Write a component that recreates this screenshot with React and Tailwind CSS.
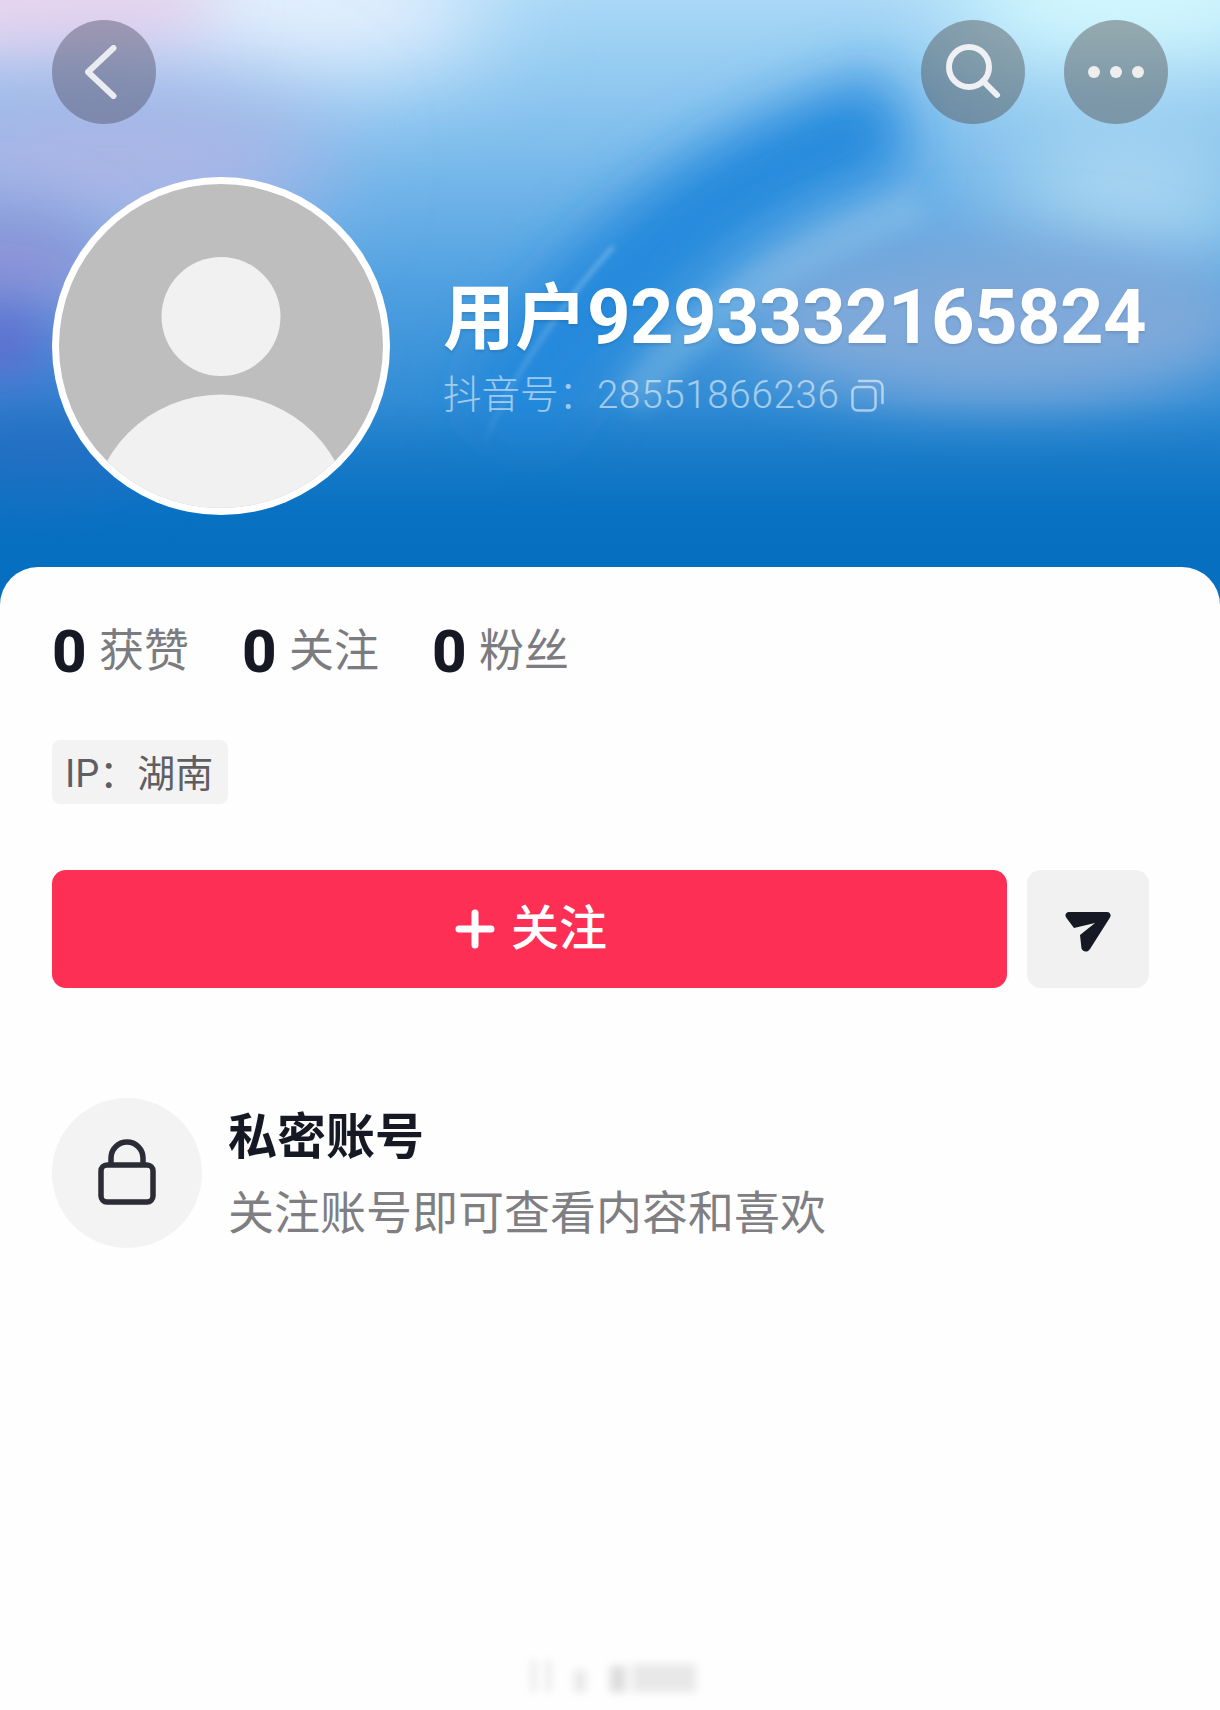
import React from 'react';

const cjk = "font-['Roboto','Noto_Sans_CJK_SC',sans-serif]";

const RoundButton = ({ children, className = '' }) => (
    <div className={`w-[104px] h-[104px] rounded-full flex items-center justify-center ${className}`}>
        {children}
    </div>
);

const HeroBackdrop = () => (
    <svg className="absolute inset-0 w-full h-full" viewBox="0 0 1220 607" preserveAspectRatio="none">
        <defs>
            <linearGradient id="base" x1="0" y1="0" x2="0" y2="607" gradientUnits="userSpaceOnUse">
                <stop offset="0" stopColor="#a9d8f6" />
                <stop offset="0.25" stopColor="#7dbcec" />
                <stop offset="0.5" stopColor="#4a9ddf" />
                <stop offset="0.7" stopColor="#2c88d2" />
                <stop offset="0.86" stopColor="#0f75c4" />
                <stop offset="0.94" stopColor="#066fc0" />
            </linearGradient>
            <linearGradient id="bottomFade" x1="0" y1="400" x2="0" y2="560" gradientUnits="userSpaceOnUse">
                <stop offset="0" stopColor="#066fc0" stopOpacity="0" />
                <stop offset="1" stopColor="#066fc0" />
            </linearGradient>
            <linearGradient id="streak" x1="612" y1="245" x2="482" y2="440" gradientUnits="userSpaceOnUse">
                <stop offset="0" stopColor="#ffffff" stopOpacity="0.28" />
                <stop offset="1" stopColor="#ffffff" stopOpacity="0.03" />
            </linearGradient>
            <filter id="b50" x="-100%" y="-100%" width="300%" height="300%"><feGaussianBlur stdDeviation="50" /></filter>
            <filter id="b30" x="-100%" y="-100%" width="300%" height="300%"><feGaussianBlur stdDeviation="30" /></filter>
            <filter id="b12" x="-100%" y="-100%" width="300%" height="300%"><feGaussianBlur stdDeviation="12" /></filter>
            <filter id="b3" x="-50%" y="-50%" width="200%" height="200%"><feGaussianBlur stdDeviation="2.500" /></filter>
        </defs>
        <rect width="1220" height="607" fill="url(#base)" />
        <ellipse cx="290" cy="5" rx="200" ry="70" fill="#eaf2ff" filter="url(#b50)" />
        <ellipse cx="30" cy="0" rx="190" ry="70" fill="#e8d6f0" filter="url(#b30)" />
        <ellipse cx="110" cy="160" rx="220" ry="90" fill="#abb6e6" filter="url(#b50)" />
        <ellipse cx="0" cy="265" rx="110" ry="60" fill="#8c96d8" filter="url(#b30)" />
        <ellipse cx="0" cy="345" rx="60" ry="45" fill="#5f6dcf" filter="url(#b30)" />
        <ellipse cx="40" cy="460" rx="110" ry="60" fill="#2f6fc6" filter="url(#b30)" />
        <ellipse cx="1130" cy="0" rx="180" ry="70" fill="#d8fcff" filter="url(#b50)" />
        <ellipse cx="1130" cy="190" rx="130" ry="90" fill="#a7d5f1" filter="url(#b50)" />
        <path d="M900 120 C760 160 620 240 500 430" fill="none" stroke="#2088dc" strokeWidth="100" filter="url(#b30)" />
        <ellipse cx="1000" cy="320" rx="250" ry="85" fill="#7ea9da" filter="url(#b30)" />
        <path d="M920 205 C800 250 700 310 630 400" fill="none" stroke="#9cc8ea" strokeWidth="34" opacity="0.4" filter="url(#b12)" />
        <rect width="1220" height="607" fill="url(#bottomFade)" />
        <path d="M612 245 C570 290 510 370 482 440 L488 442 C516 372 574 294 615 248 Z" fill="url(#streak)" filter="url(#b3)" />
    </svg>
);

const Avatar = () => (
    <svg className="shrink-0" width="338" height="338" viewBox="0 0 338 338">
        <defs>
            <clipPath id="avatarClip"><circle cx="169" cy="169" r="162" /></clipPath>
        </defs>
        <circle cx="169" cy="169" r="169" fill="#ffffff" />
        <g clipPath="url(#avatarClip)">
            <rect width="338" height="338" fill="#bebebe" />
            <circle cx="169" cy="139.500" r="59.500" fill="#f1f1f1" />
            <circle cx="169" cy="348.500" r="131" fill="#f1f1f1" />
        </g>
    </svg>
);

const Stat = ({ label }) => (
    <div className="flex items-center">
        <span className="text-[60px] leading-[60px] font-extrabold text-[#161823] font-['Roboto',sans-serif] w-[47px] tracking-[-1px]">0</span>
        <span className={`text-[45px] leading-[60px] text-[#7b7b80] ${cjk}`}>{label}</span>
    </div>
);

export default function App() {
    return (
        <div className={`w-[1220px] h-[1710px] bg-[#fefefe] overflow-hidden ${cjk}`}>
            {/* header */}
            <div className="relative h-[607px] px-[52px] pt-[20px]">
                <HeroBackdrop />
                <div className="relative flex justify-between">
                    <RoundButton className="bg-[#505068]/45">
                        <svg className="-ml-[6px]" width="32" height="54" viewBox="0 0 32 54" fill="none" stroke="#ebebf2" strokeWidth="6" strokeLinecap="round" strokeLinejoin="round">
                            <path d="M28.500 3 L3 27 L28.500 51" />
                        </svg>
                    </RoundButton>
                    <div className="flex gap-[39px]">
                        <RoundButton className="bg-[#505050]/45">
                            <svg className="mt-[-2px]" width="56" height="56" viewBox="0 0 56 56" fill="none" stroke="#eef0f4" strokeWidth="6" strokeLinecap="round">
                                <circle cx="24" cy="24" r="20" />
                                <path d="M38 38 L52 52" />
                            </svg>
                        </RoundButton>
                        <RoundButton className="bg-[#505050]/45">
                            <div className="flex gap-[10px]">
                                <span className="w-[12px] h-[12px] rounded-full bg-[#eeeeee]" />
                                <span className="w-[12px] h-[12px] rounded-full bg-[#eeeeee]" />
                                <span className="w-[12px] h-[12px] rounded-full bg-[#eeeeee]" />
                            </div>
                        </RoundButton>
                    </div>
                </div>
                <div className="relative flex mt-[53px]">
                    <Avatar />
                    <div className="ml-[53px] pt-[98px]">
                        <div className="text-[72px] leading-[84px] font-bold text-white whitespace-nowrap [text-shadow:0_2px_3px_rgba(0,0,0,0.12)]">
                            用户<span className="text-[76px] tracking-[-0.6px]">9293332165824</span>
                        </div>
                        <div className="flex items-center text-[38.500px] leading-[46px] font-light text-white/55 whitespace-nowrap mt-[11px]">
                            <span>抖音号：</span>
                            <span className="tracking-[0.7px]">28551866236</span>
                            <svg className="ml-[11px]" width="33" height="33" viewBox="0 0 33 33" fill="none" stroke="currentColor" strokeWidth="2.500">
                                <rect x="1.500" y="8" width="23" height="23.500" rx="5" />
                                <path d="M8 2 H25 A6 6 0 0 1 31.500 8 V24" strokeLinecap="round" />
                            </svg>
                        </div>
                    </div>
                </div>
            </div>

            {/* card */}
            <div className="relative -mt-[40px] h-[1143px] rounded-t-[38px] bg-[#fefefe] px-[52px] pt-[55px]">
                <div className="flex gap-[53px]">
                    <Stat label="获赞" />
                    <Stat label="关注" />
                    <Stat label="粉丝" />
                </div>
                <div className="w-[176px] h-[64px] mt-[58px] rounded-[8px] bg-[#f3f3f3] flex items-center pl-[13px] pt-[5px] text-[38px] text-[#5e5e63] whitespace-nowrap">
                    IP：湖南
                </div>
                <div className="flex gap-[20px] mt-[66px]">
                    <div className="w-[955px] h-[118px] rounded-[14px] bg-[#fe2f55] flex items-center justify-center gap-[16px] pl-[3px] text-white">
                        <svg width="40" height="40" viewBox="0 0 40 40" fill="none" stroke="currentColor" strokeWidth="7" strokeLinecap="round">
                            <path d="M20 4 V36 M4 20 H36" />
                        </svg>
                        <span className="text-[48px] leading-[60px] font-medium">关注</span>
                    </div>
                    <div className="w-[122px] h-[118px] rounded-[14px] bg-[#f1f1f2] flex items-center justify-center">
                        <svg className="mt-[6px]" width="46" height="40" viewBox="0 0 46 40" fill="#161823">
                            <path d="M4 0 H42 C45 0 46.500 3 45 5.500 L25 37 C23 40.500 18 40.500 16.500 36.500 L15 23 L30 11 L9 16 L1.500 6 C-0.800 3 1 0 4 0 Z" />
                        </svg>
                    </div>
                </div>
                <div className="flex mt-[110px]">
                    <div className="w-[150px] h-[150px] rounded-full bg-[#f3f3f3] flex items-center justify-center">
                        <svg className="-mt-[3px]" width="58" height="66" viewBox="0 0 58 66" fill="none" stroke="#2b2c36" strokeWidth="5.500">
                            <rect x="3" y="26" width="52" height="37" rx="6" />
                            <path d="M13 26 V19 A16 16 0 0 1 45 19 V26" />
                        </svg>
                    </div>
                    <div className="ml-[26px]">
                        <div className="text-[49px] leading-[60px] font-bold text-[#161823] mt-[10px]">私密账号</div>
                        <div className="text-[46px] leading-[60px] text-[#7f7f83] mt-[15px] whitespace-nowrap">关注账号即可查看内容和喜欢</div>
                    </div>
                </div>
                {/* blurred watermark */}
                <div className="flex items-end gap-[24px] ml-[480px] mt-[412px] blur-[4px]">
                    <div className="w-[18px] h-[32px] border-x-[3px] border-[#d8d8d8]" />
                    <div className="w-[12px] h-[22px] bg-[#e8e8e8]" />
                    <div className="w-[16px] h-[26px] bg-[#dddddd]" />
                    <div className="w-[64px] h-[28px] -ml-[18px] bg-[#e8e8e8]" />
                </div>
            </div>
        </div>
    );
}
